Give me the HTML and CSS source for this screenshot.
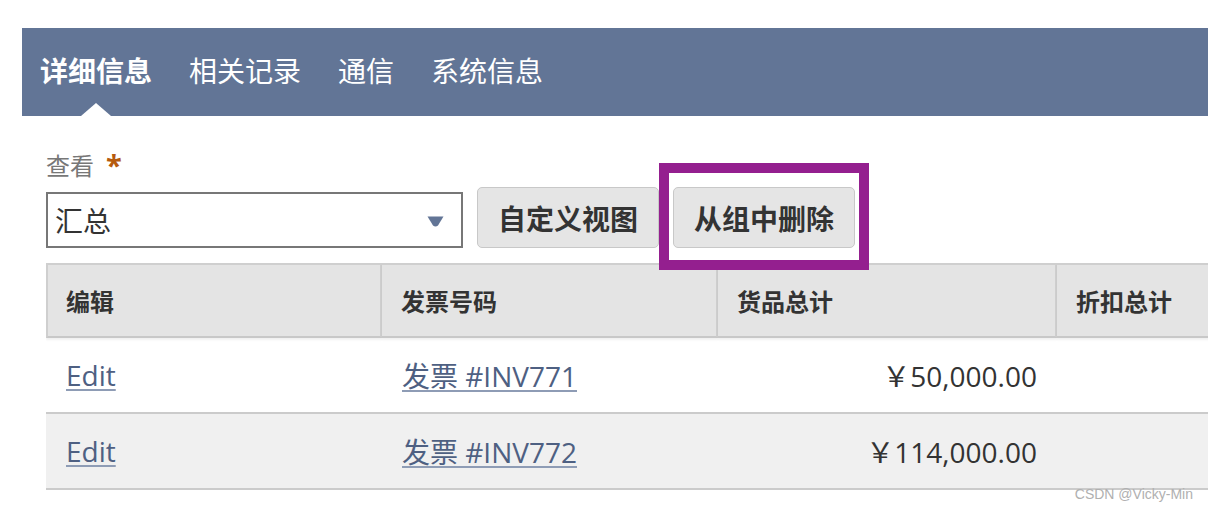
FILE: index.html
```html
<!DOCTYPE html>
<html lang="zh-CN">
<head>
<meta charset="utf-8">
<title>发票</title>
<link rel="stylesheet" href="styles.css">
</head>
<body>
<div class="page">
  <nav class="tabs">
    <a class="tab active" href="#">详细信息</a>
    <a class="tab" href="#">相关记录</a>
    <a class="tab" href="#">通信</a>
    <a class="tab" href="#">系统信息</a>
  </nav>
  <section class="content">
    <div class="field-label">查看<span class="req">*</span></div>
    <div class="controls">
      <div class="select">
        <span class="select-value">汇总</span>
        <svg class="caret" width="17" height="11" viewBox="0 0 17 11"><path d="M0.5 0.5 H16.5 L11 9.6 Q8.5 11.6 6 9.6 Z" fill="#627596"/></svg>
      </div>
      <button class="btn">自定义视图</button>
      <span class="mark-wrap">
        <button class="btn">从组中删除</button>
        <span class="mark"></span>
      </span>
    </div>
    <div class="grid-wrap">
      <table class="grid">
        <colgroup>
          <col class="c1"><col class="c2"><col class="c3"><col class="c4">
        </colgroup>
        <thead>
          <tr><th class="first">编辑</th><th>发票号码</th><th>货品总计</th><th>折扣总计</th></tr>
        </thead>
        <tbody>
          <tr><td><a href="#">Edit</a></td><td><a href="#">发票 #INV771</a></td><td class="num">￥50,000.00</td><td></td></tr>
          <tr class="alt"><td><a href="#">Edit</a></td><td><a href="#">发票 #INV772</a></td><td class="num">￥114,000.00</td><td></td></tr>
        </tbody>
      </table>
    </div>
  </section>
  <div class="watermark">CSDN @Vicky-Min</div>
</div>
</body>
</html>
```

FILE: styles.css
```css
html, body {
  margin: 0;
  padding: 0;
  background: #fff;
  overflow: hidden;
}
body {
  font-family: "Open Sans", "Noto Sans CJK SC", sans-serif;
  color: #333;
}
.page {
  position: relative;
  width: 1208px;
  height: 512px;
  overflow: hidden;
}
.tabs {
  margin: 28px 0 0 22px;
  height: 88px;
  background: #627596;
  display: flex;
  padding-left: 18px;
  gap: 37px;
}
.tab {
  position: relative;
  display: flex;
  align-items: center;
  padding-bottom: 4px;
  color: #fff;
  text-decoration: none;
  font-size: 28px;
  font-family: "Noto Sans CJK SC", sans-serif;
  font-weight: 400;
}
.tab.active {
  font-weight: 700;
}
.tab.active::after {
  content: "";
  position: absolute;
  left: 50%;
  bottom: 0;
  transform: translateX(-50%);
  border-left: 15px solid transparent;
  border-right: 15px solid transparent;
  border-bottom: 13px solid #fff;
}
.content {
  padding: 34px 0 0 46px;
}
.field-label {
  height: 30px;
  line-height: 30px;
  font-size: 24px;
  color: #777;
  font-family: "Noto Sans CJK SC", sans-serif;
}
.req {
  margin-left: 12px;
  color: #b55a0e;
  font-weight: 700;
  font-size: 29px;
  font-family: "Open Sans", sans-serif;
  vertical-align: top;
  line-height: 30px;
}
.controls {
  margin-top: 7px;
  display: flex;
  align-items: flex-end;
  gap: 14px;
}
.select {
  box-sizing: border-box;
  width: 417px;
  height: 56px;
  border: 2px solid #777;
  display: flex;
  align-items: center;
  justify-content: space-between;
  padding: 0 17px 0 7px;
  font-size: 28px;
  color: #333;
  font-family: "Noto Sans CJK SC", sans-serif;
}
.caret {
  display: block;
  margin-top: 2px;
}
.btn {
  box-sizing: border-box;
  height: 61px;
  padding: 0 20px;
  border: 1px solid #c8c8c8;
  border-radius: 5px;
  background: #e5e5e5;
  color: #333;
  font-family: "Noto Sans CJK SC", sans-serif;
  font-size: 28px;
  font-weight: 700;
  line-height: 1;
}
.mark-wrap {
  position: relative;
  display: block;
}
.mark-wrap .btn {
  display: block;
}
.mark {
  position: absolute;
  left: -14px;
  right: -14px;
  top: -24px;
  bottom: -22px;
  border: 10px solid #941f8f;
  pointer-events: none;
  z-index: 2;
}
.grid-wrap {
  margin-top: 15px;
  width: 1162px;
  overflow: hidden;
}
.grid {
  border-collapse: separate;
  border-spacing: 0;
  table-layout: fixed;
  width: 1260px;
}
.c1 { width: 336px; }
.c2 { width: 336px; }
.c3 { width: 339px; }
.c4 { width: 249px; }
.grid th {
  height: 71px;
  padding: 0 0 0 19px;
  text-align: left;
  font-family: "Noto Sans CJK SC", sans-serif;
  font-size: 24px;
  font-weight: 700;
  color: #333;
  background: #e4e4e4;
  border-top: 2px solid #cfcfcf;
  border-right: 2px solid #cfcfcf;
  border-bottom: 2px solid #c8c8c8;
  box-shadow: 0 2px 2px rgba(0, 0, 0, 0.06);
  vertical-align: middle;
}
.grid th.first {
  border-left: 2px solid #cfcfcf;
  padding-left: 18px;
}
.grid td {
  height: 74px;
  padding: 0 20px 0 20px;
  font-size: 28px;
  color: #333;
  border-bottom: 2px solid #cbcbcb;
  vertical-align: middle;
  white-space: nowrap;
}
.grid tr.alt td {
  background: #f0f0f0;
}
.grid td:first-child {
  padding-left: 20px;
}
.grid td.num {
  text-align: right;
  padding-right: 20px;
}
.grid a {
  color: #4e6082;
  text-decoration: underline;
  text-decoration-color: #8e9cb5;
  text-decoration-thickness: 2px;
  text-underline-offset: 3px;
}
.watermark {
  position: absolute;
  right: 15px;
  top: 486px;
  font-family: "Liberation Sans", Arial, sans-serif;
  font-size: 14px;
  color: #b0b0b0;
}
```
